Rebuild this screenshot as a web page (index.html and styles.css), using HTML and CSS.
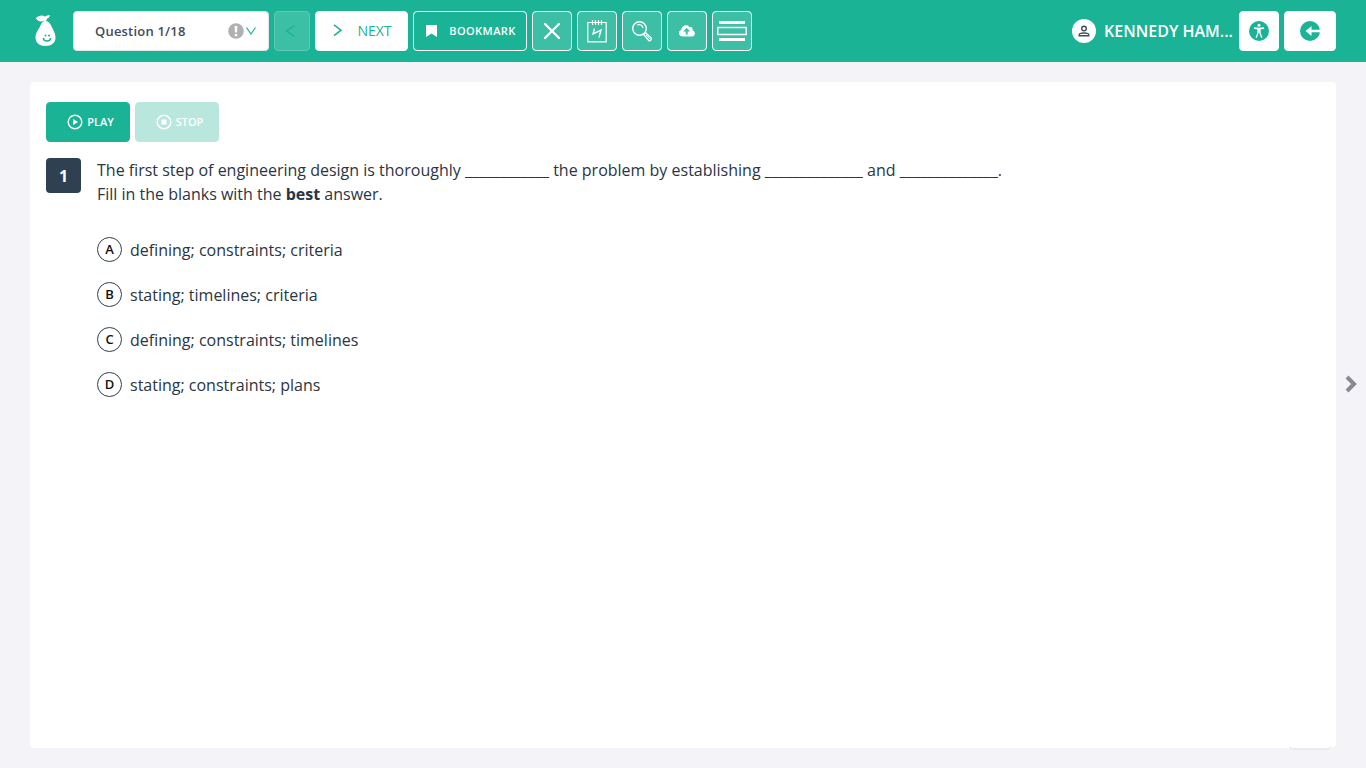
FILE: index.html
```html
<!DOCTYPE html>
<html lang="en">
<head>
<meta charset="utf-8">
<title>Question 1/18</title>
<meta name="viewport" content="width=device-width, initial-scale=1">
<link rel="stylesheet" href="styles.css">
</head>
<body>
<header class="topbar">
  <a class="logo" href="#" aria-label="Home">
    <svg width="21" height="32" viewBox="0 0 21 32">
      <path fill="#fff" d="M10.500 6C13.500 6 15.500 9 16.500 11.500C18 14.500 20.500 18 20.500 22.500C20.500 28 16.500 31 10.500 31S.5 28 .5 22.500C.5 18 3.500 14.500 5 11.500C6 9 7.500 6 10.500 6Z"/>
      <path fill="#fff" d="M.8 3.200C3.500.2 7.500-.3 9.800 1.500C11.300.7 13 .2 14.800 0C14.800 2 13.500 3.300 11.800 3.800L11 7H9L9.500 5.500C6.500 7.200 3 6.500 .8 3.200Z"/>
      <circle cx="10.500" cy="20.500" r="1" fill="#1ab395"/><circle cx="14" cy="20.500" r="1" fill="#1ab395"/>
      <path d="M8.500 23C8.500 27 15.500 27 15.500 23" fill="none" stroke="#1ab395" stroke-width="1.600"/>
    </svg>
  </a>
  <nav class="tools" aria-label="Test tools">
    <div class="picker">
      <select class="picker-select" aria-label="Question"><option>Question 1/18</option></select>
      <svg class="picker-marks" width="29" height="16" viewBox="0 0 29 16">
        <circle cx="8" cy="8" r="7.800" fill="#b1b1b1"/>
        <path fill="#fff" d="M6.600 3h2.800L9 9.500H7z"/><rect x="6.800" y="11" width="2.400" height="2.200" fill="#fff"/>
        <path d="M18.500 4.500L23 11l4.500-6.500" fill="none" stroke="#1ab395" stroke-width="1.200"/>
      </svg>
    </div>
    <button class="btn prev" disabled aria-label="Previous"><svg width="12" height="14" viewBox="0 0 12 14"><path d="M9.500 1.500L1.500 7l8 5.500" fill="none" stroke="#1ab395" stroke-width="1.300"/></svg></button>
    <button class="btn next"><svg width="9" height="14" viewBox="0 0 9 14"><path d="M1 .8l7 5.400-7 5.400" fill="none" stroke="#1ab395" stroke-width="1.500"/></svg>NEXT</button>
    <button class="btn bookmark"><svg width="11" height="12" viewBox="0 0 11 12"><path fill="#fff" d="M0 1q0-1 1-1h9q1 0 1 1v11L5.500 8.500 0 12z"/></svg>BOOKMARK</button>
    <button class="btn tool" aria-label="Cross out"><svg width="18" height="18" viewBox="0 0 18 18"><path d="M2 2l14 14M16 2L2 16" stroke="#fff" stroke-width="2.400" stroke-linecap="round"/></svg></button>
    <button class="btn tool" aria-label="Scratchpad"><svg width="20" height="24" viewBox="0 0 20 24" fill="none" stroke="#fff"><path d="M.8 3.500h18.400v19.300H.8z" stroke-width="1.200"/><path d="M5.500 1v5M8.500 1v5M11.500 1v5M14.500 1v5" stroke-width="1.200"/><path d="M7.500 9.500L6 15l8-4-2 7.500" stroke-width="1.400"/></svg></button>
    <button class="btn tool" aria-label="Magnify"><svg width="20" height="21" viewBox="0 0 20 21" fill="none" stroke="#fff"><circle cx="7.500" cy="7.500" r="6.800" stroke-width="1.400"/><path d="M5 4q5-1.500 6 3" stroke-width="1.200"/><path d="M11.800 13.500l1.800-1.800 5.500 5.300q.5 1.500-.8 2.500t-2-.5z" stroke-width="1.400"/><path d="M14 14l4 4" stroke-width="1"/></svg></button>
    <button class="btn tool" aria-label="Upload"><svg width="16" height="12" viewBox="0 0 16 12"><path fill="#fff" d="M4 11.500C-1.200 11.500-1 5.500 2.300 5C2.500.5 8.300-1.500 10.500 2.200C12.500 1.500 14.200 3 13.500 5.200C17 6 16.500 11.500 13 11.500Z"/><path fill="#3cbfa5" d="M7.700 2.700l3.500 3.700H8.700v3.100h-2V6.400H4.200z"/></svg></button>
    <button class="btn tool" aria-label="Line reader"><svg width="30" height="22" viewBox="0 0 30 22"><path fill="#fff" d="M2 1h26v3H2zM2 18h26v3H2z"/><path d="M.8 7.500h28.400v7H.8z" fill="none" stroke="#fff" stroke-width="1.400"/></svg></button>
  </nav>
  <div class="account">
    <svg class="avatar" width="24" height="24" viewBox="0 0 24 24"><circle cx="12" cy="12" r="12" fill="#fff"/><g fill="none" stroke="#434b5d" stroke-width="1.400"><circle cx="12" cy="9.500" r="2.300"/><path d="M7.200 16.800v-1q0-1.800 4.800-1.800t4.800 1.800v1z"/></g></svg>
    <span class="name">KENNEDY HAM...</span>
    <button class="btn white" aria-label="Accessibility"><svg width="20" height="20" viewBox="0 0 20 20"><circle cx="10" cy="10" r="10" fill="#1ab395"/><circle cx="10" cy="4.200" r="1.500" fill="#fff"/><path d="M5 7q5 1 10 0M10 7.500v4M9 7.800V12L7.200 16.800M11 7.800V12l1.800 4.800" fill="none" stroke="#fff" stroke-width="1.300"/></svg></button>
    <button class="btn white exit" aria-label="Save and exit"><svg width="20" height="20" viewBox="0 0 20 20"><circle cx="10" cy="10" r="10" fill="#1ab395"/><path fill="#fff" d="M5.500 10l6-5v3.800H20v2.400h-8.500V15z"/></svg></button>
  </div>
</header>
<main class="stage">
  <section class="card">
    <div class="audio">
      <button class="btn speech"><svg width="16" height="16" viewBox="0 0 16 16"><circle cx="8" cy="8" r="6.800" fill="none" stroke="#fff" stroke-width="1.400"/><path fill="#fff" d="M6 5l5 3-5 3z"/></svg>PLAY</button>
      <button class="btn speech" disabled><svg width="16" height="16" viewBox="0 0 16 16"><circle cx="8" cy="8" r="6.800" fill="none" stroke="#fff" stroke-width="1.400"/><path fill="#fff" d="M5.500 5.500h5v5h-5z"/></svg>STOP</button>
    </div>
    <div class="question">
      <span class="number">1</span>
      <div class="body">
        <p class="prompt">The first step of engineering design is thoroughly ____________ the problem by establishing ______________ and ______________.<br>Fill in the blanks with the <b>best</b> answer.</p>
        <div class="choices" role="radiogroup" aria-label="Answers">
          <label class="choice"><input class="radio" type="radio" name="answer"><span class="letter">A</span>defining; constraints; criteria</label>
          <label class="choice"><input class="radio" type="radio" name="answer"><span class="letter">B</span>stating; timelines; criteria</label>
          <label class="choice"><input class="radio" type="radio" name="answer"><span class="letter">C</span>defining; constraints; timelines</label>
          <label class="choice"><input class="radio" type="radio" name="answer"><span class="letter">D</span>stating; constraints; plans</label>
        </div>
      </div>
    </div>
    <span class="tab"></span>
  </section>
  <button class="advance" aria-label="Next question"><svg width="12" height="18" viewBox="0 0 12 18"><path d="M2 2l7 7-7 7" fill="none" stroke="#878a91" stroke-width="4"/></svg></button>
</main>
</body>
</html>
```
FILE: styles.css
```css
* { box-sizing: border-box; }
body {
  margin: 0;
  min-height: 100vh;
  display: flex;
  flex-direction: column;
  background: #f3f3f8;
  color: #2b3543;
  font: 16px/24px "Open Sans", sans-serif;
}
svg { display: block; flex: none; }
.topbar {
  display: flex;
  align-items: center;
  height: 62px;
  padding: 0 30px 0 35px;
  background: #1ab395;
}
.logo { margin-right: 17px; }
.tools { display: flex; gap: 5px; }
.btn {
  display: flex;
  align-items: center;
  justify-content: center;
  height: 40px;
  padding: 0;
  border: 1px solid #fff;
  border-radius: 4px;
  background: #fff;
  font: 600 11px/16px "Open Sans", sans-serif;
}
.picker { position: relative; width: 196px; }
.picker-select {
  appearance: none;
  width: 100%;
  height: 40px;
  padding: 0 48px 0 21px;
  border: 1px solid #e5e5e5;
  border-radius: 4px;
  background: #fff;
  color: #434b5d;
  font: 600 13px/20px "Open Sans", sans-serif;
  letter-spacing: 0.015em;
}
.picker-marks { position: absolute; right: 12px; top: 12px; pointer-events: none; }
.prev {
  width: 36px;
  padding-right: 2px;
  border-color: #5fcab5;
  background: #3cbfa5;
}
.next {
  width: 93px;
  gap: 15px;
  padding-left: 2px;
  color: #1ab395;
  font-size: 14px;
  font-weight: 400;
}
.bookmark {
  width: 114px;
  gap: 12px;
  padding-left: 2px;
  background: transparent;
  color: #fff;
  letter-spacing: 0.04em;
}
.tool { width: 40px; background: #3cbfa5; }
.account { display: flex; align-items: center; gap: 5px; margin-left: auto; }
.name {
  margin: 0 1px 0 3px;
  color: #fff;
  font-weight: 600;
}
.white { width: 40px; }
.exit { width: 52px; }
.stage {
  flex: 1;
  display: flex;
  align-items: center;
  padding: 20px 0 20px 30px;
}
.card {
  position: relative;
  flex: 1;
  align-self: stretch;
  padding: 20px 16px;
  border-radius: 4px;
  background: #fff;
}
.audio { display: flex; gap: 5px; }
.speech {
  width: 84px;
  gap: 4px;
  padding-left: 5px;
  border-color: #1ab395;
  background: #1ab395;
  color: #fff;
}
.speech:disabled { opacity: 0.3; }
.question { display: flex; gap: 16px; margin-top: 16px; }
.number {
  flex: none;
  width: 35px;
  height: 35px;
  border-radius: 4px;
  background: #2f4050;
  color: #fff;
  font-weight: 700;
  line-height: 36px;
  text-align: center;
}
.prompt { margin: 0; }
.choices { display: grid; justify-items: start; gap: 20px; margin-top: 31px; }
.choice { position: relative; display: flex; align-items: center; gap: 8px; height: 25px; }
.radio { position: absolute; left: 0; width: 25px; height: 25px; margin: 0; opacity: 0; }
.letter {
  width: 25px;
  height: 25px;
  border: 1px solid #2f4050;
  border-radius: 50%;
  color: #111;
  font-size: 13px;
  font-weight: 600;
  line-height: 23px;
  text-align: center;
}
.tab {
  position: absolute;
  right: 5px;
  bottom: 0;
  width: 42px;
  height: 8px;
  border-radius: 4px;
  box-shadow: 0 2px 0 #e9e9ee;
}
.advance {
  width: 30px;
  margin-bottom: 62px;
  padding: 0 0 0 9px;
  border: 0;
  background: transparent;
}
```
